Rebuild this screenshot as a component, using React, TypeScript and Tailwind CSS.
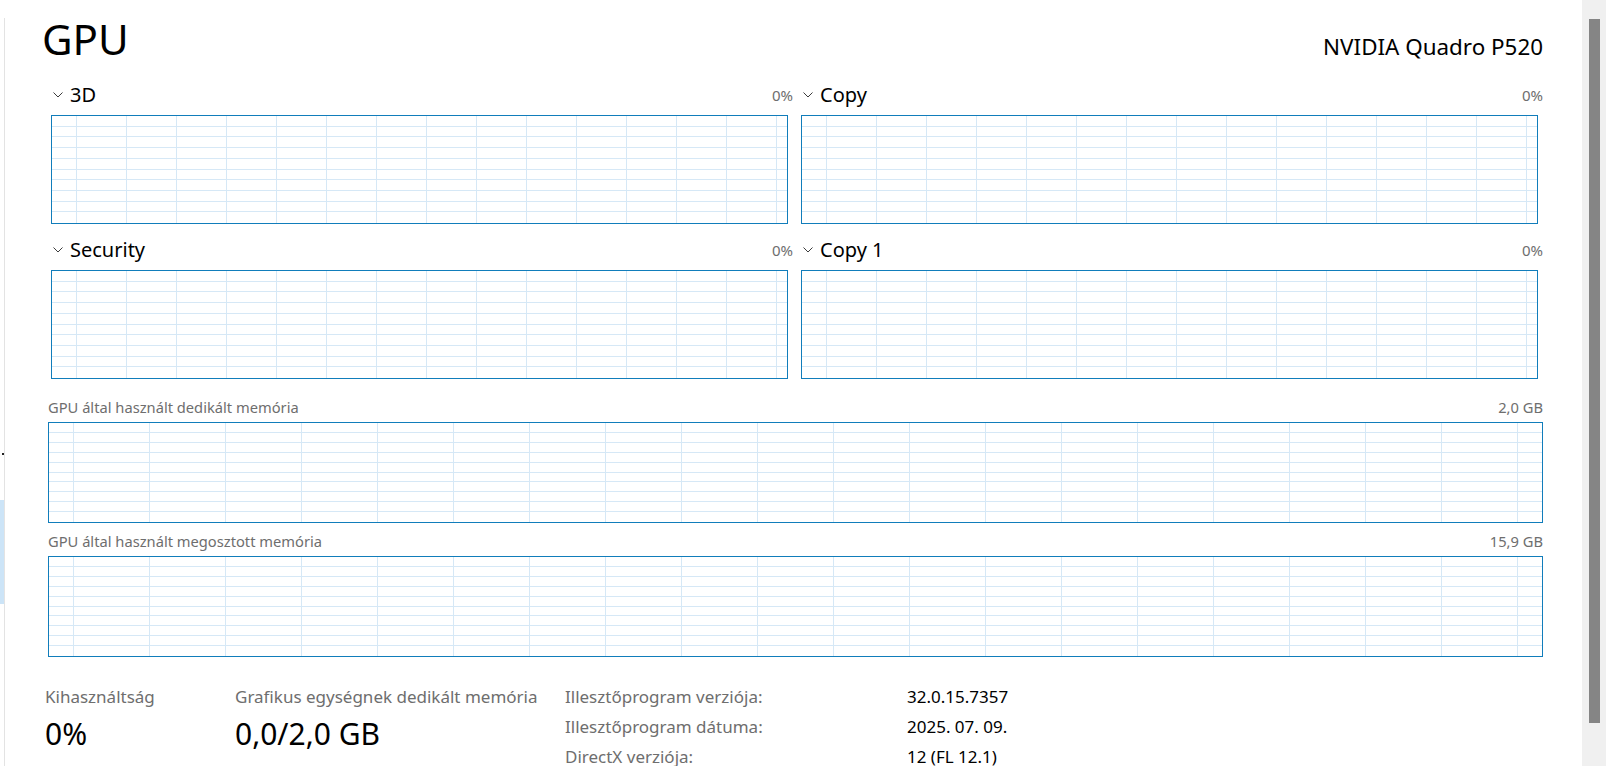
import React from 'react';

const font = { fontFamily: '"Noto Sans", "Open Sans", sans-serif' };

function Chevron() {
  return (
    <svg width="10" height="6" viewBox="0 0 10 6" className="block">
      <path d="M0.5 0.5 L5 5 L9.5 0.5" fill="none" stroke="#3c3c3c" strokeWidth="1" />
    </svg>
  );
}

function Grid({ id, height, dx, rows }: { id: string; height: number; dx: number; rows: number }) {
  const inner = height - 2;
  const ys = Array.from({ length: rows - 1 }, (_, i) => Math.round(((i + 1) * inner) / rows) - 0.5);
  return (
    <svg className="block w-full h-full">
      <defs>
        <pattern id={id} x={24} y={0} width={dx} height={inner} patternUnits="userSpaceOnUse">
          <line x1={0.5} y1={0} x2={0.5} y2={inner} stroke="#d6e8f6" strokeWidth="1" />
        </pattern>
      </defs>
      <rect x={0} y={0} width="100%" height="100%" fill={`url(#${id})`} />
      {ys.map((y) => (
        <line key={y} x1={0} x2="100%" y1={y} y2={y} stroke="#d6e8f6" strokeWidth="1" />
      ))}
    </svg>
  );
}

function EngineChart({ id, name }: { id: string; name: string }) {
  return (
    <div>
      <div className="flex items-center justify-between h-[28px]">
        <div className="flex items-center pl-[2px]">
          <Chevron />
          <span className="ml-[7px] text-[20px] leading-[28px] text-black">{name}</span>
        </div>
        <span className="text-[15px] leading-[28px] text-[#6e6e6e]">0%</span>
      </div>
      <div className="mt-[6px] mr-[5px] h-[109px] border border-[#117dbb]">
        <Grid id={id} height={109} dx={50} rows={10} />
      </div>
    </div>
  );
}

function MemoryChart({ id, label, value }: { id: string; label: string; value: string }) {
  return (
    <div>
      <div className="flex justify-between text-[14.7px] leading-[20px] text-[#6e6e6e]">
        <span>{label}</span>
        <span>{value}</span>
      </div>
      <div className="mt-[5px] h-[101px] border border-[#117dbb]">
        <Grid id={id} height={101} dx={76} rows={10} />
      </div>
    </div>
  );
}

const details = [
  { k: 'Illesztőprogram verziója:', v: '32.0.15.7357' },
  { k: 'Illesztőprogram dátuma:', v: '2025. 07. 09.' },
  { k: 'DirectX verziója:', v: '12 (FL 12.1)' },
];

export default function App() {
  return (
    <div className="flex h-[766px] w-full overflow-hidden bg-white" style={font}>
      {/* sliver of the side navigation */}
      <div className="relative w-[4px] shrink-0">
        <div className="mt-[500px] h-[104px] bg-[#cce4f7]" />
        <div className="absolute left-[2px] top-[453px] h-[2px] w-[2px] bg-[#222]" />
      </div>
      <div className="w-px shrink-0 pt-[18px]">
        <div className="h-full bg-[#e3e3e3]" />
      </div>

      <div className="flex-1 min-w-0 pl-[43px] pr-[39px] pt-[15px]">
        <div className="flex items-baseline justify-between h-[48px]">
          <h1 className="-ml-[6px] text-[42px] leading-[48px] font-normal text-black">GPU</h1>
          <span className="text-[22.4px] text-black">NVIDIA Quadro P520</span>
        </div>

        <div className="ml-[3px] mt-[18px] grid grid-cols-2 gap-x-[8px] gap-y-[12px]">
          <EngineChart id="g3d" name="3D" />
          <EngineChart id="gcopy" name="Copy" />
          <EngineChart id="gsec" name="Security" />
          <EngineChart id="gcopy1" name="Copy 1" />
        </div>

        <div className="mt-[18px]">
          <MemoryChart id="gded" label="GPU által használt dedikált memória" value="2,0 GB" />
        </div>
        <div className="mt-[8px]">
          <MemoryChart id="gshr" label="GPU által használt megosztott memória" value="15,9 GB" />
        </div>

        <div className="mt-[28px] flex">
          <div className="-ml-[3px] w-[190px] shrink-0">
            <div className="text-[17px] leading-[24px] text-[#6e6e6e]">Kihasználtság</div>
            <div className="mt-[5px] text-[30px] leading-[40px] text-black">0%</div>
          </div>
          <div className="w-[330px] shrink-0">
            <div className="whitespace-nowrap text-[17px] leading-[24px] text-[#6e6e6e]">Grafikus egységnek dedikált memória</div>
            <div className="mt-[5px] text-[30px] leading-[40px] text-black">0,0/2,0 GB</div>
          </div>
          <div className="-mt-[3px] text-[17px] leading-[30px]">
            {details.map((d) => (
              <div key={d.k} className="flex">
                <span className="w-[342px] text-[#6e6e6e]">{d.k}</span>
                <span className="text-black">{d.v}</span>
              </div>
            ))}
          </div>
        </div>
      </div>

      <div className="w-[24px] shrink-0 bg-[#f0f0f0] pl-[7px] pt-[19px]">
        <div className="h-[704px] w-[11px] bg-[#858585]" />
      </div>
    </div>
  );
}
